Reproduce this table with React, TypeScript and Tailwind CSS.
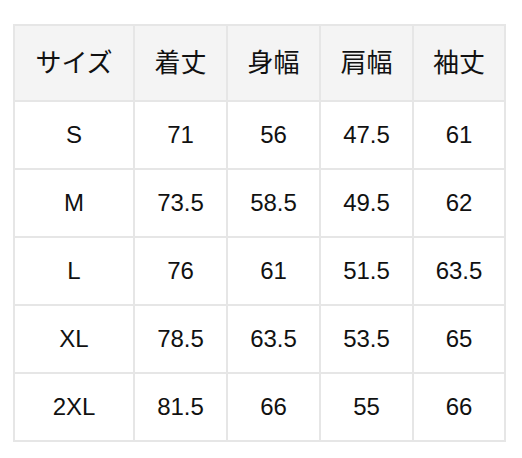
const headers = ["サイズ", "着丈", "身幅", "肩幅", "袖丈"];

const rows = [
  ["S", "71", "56", "47.5", "61"],
  ["M", "73.5", "58.5", "49.5", "62"],
  ["L", "76", "61", "51.5", "63.5"],
  ["XL", "78.5", "63.5", "53.5", "65"],
  ["2XL", "81.5", "66", "55", "66"],
];

export default function App() {
  return (
    <div
      className="min-h-[458px] bg-white pl-[13px] pt-[24px] text-[24px] text-[#111]"
      style={{ fontFamily: '"Liberation Sans", "Noto Sans CJK JP", sans-serif' }}
    >
      <div className="grid w-fit grid-cols-[118px_91px_91px_91px_90px] gap-[2px] bg-[#e6e6e6] p-[2px]">
        {headers.map((h) => (
          <div key={h} className="flex h-[74px] items-center justify-center bg-[#f4f4f4] text-[26px]">
            {h}
          </div>
        ))}
        {rows.map((row) =>
          row.map((cell, i) => (
            <div key={row[0] + i} className="flex h-[66px] items-center justify-center bg-white">
              {cell}
            </div>
          ))
        )}
      </div>
    </div>
  );
}
